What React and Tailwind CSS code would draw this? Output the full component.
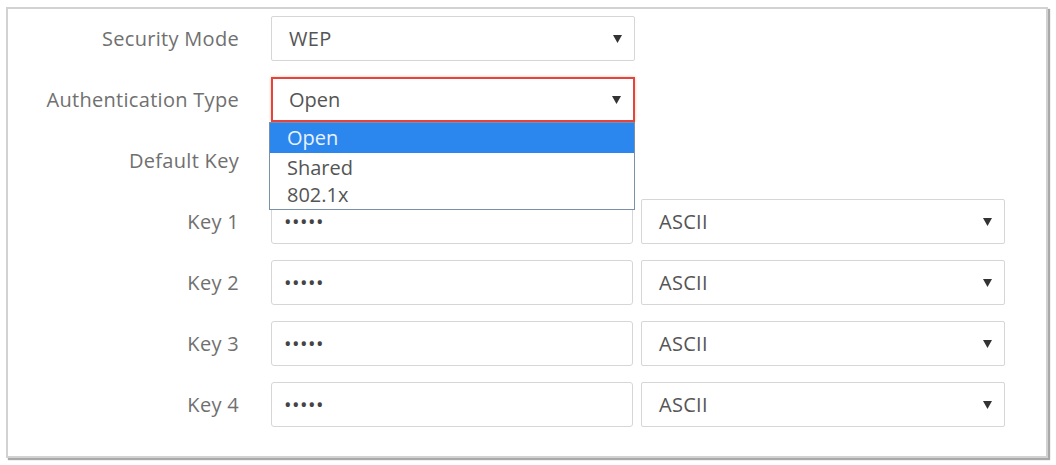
import React from "react";

const Arrow = () => (
  <svg width="9" height="8" viewBox="0 0 9 8" className="shrink-0">
    <path d="M0 0 H9 L4.5 8 Z" fill="#333" />
  </svg>
);

function Row({ label, children }) {
  return (
    <div className="flex items-center h-[45px]">
      <div className="w-[231px] text-right text-[20px] tracking-[0.3px] text-[#707070]">{label}</div>
      <div className="ml-[32px] flex gap-2">{children}</div>
    </div>
  );
}

function Select({ value, focused }) {
  return (
    <div
      className={
        focused
          ? "w-[364px] h-[45px] flex items-center justify-between pl-[16px] pr-[12px] border-2 border-[#e2453f] shadow-[0_0_3px_#f7c9a8] bg-white text-[20px] text-[#555]"
          : "w-[364px] h-[45px] flex items-center justify-between pl-[17px] pr-[12px] border border-[#d6d6d6] rounded-[2px] bg-white text-[20px] tracking-[0.3px] text-[#555]"
      }
    >
      <span>{value}</span>
      <Arrow />
    </div>
  );
}

function KeyInput() {
  return (
    <div className="w-[362px] h-[45px] flex items-center pl-[12px] border border-[#d6d6d6] rounded-[3px] bg-white text-[#444] text-[20px] tracking-[0.5px]">
      •••••
    </div>
  );
}

export default function App() {
  return (
    <div className="w-[1056px] h-[465px] bg-white pt-[7px] pl-[6px] font-['Open_Sans',sans-serif]">
      <div className="w-[1042px] h-[451px] border-2 border-[#d2d2d2] shadow-[2px_2px_1px_#a9a9a9] bg-white pt-[7px] flex flex-col gap-4">
        <Row label="Security Mode">
          <Select value="WEP" />
        </Row>
        <Row label="Authentication Type">
          <div className="relative">
            <Select value="Open" focused />
            <div className="absolute left-[-2px] top-[45px] w-[366px] h-[88px] z-10 bg-white border border-[#7a8fa8] text-[20px] text-[#555] leading-[29px]">
              <div className="bg-[#2b86ee] text-[#e8f3ff] pl-[17px] h-[30px]">Open</div>
              <div className="pl-[17px] h-[29px]">Shared</div>
              <div className="pl-[17px] h-[27px] leading-[25px]">802.1x</div>
            </div>
          </div>
        </Row>
        <Row label="Default Key" />
        {["Key 1", "Key 2", "Key 3", "Key 4"].map((k) => (
          <Row key={k} label={k}>
            <KeyInput />
            <Select value="ASCII" />
          </Row>
        ))}
      </div>
    </div>
  );
}
